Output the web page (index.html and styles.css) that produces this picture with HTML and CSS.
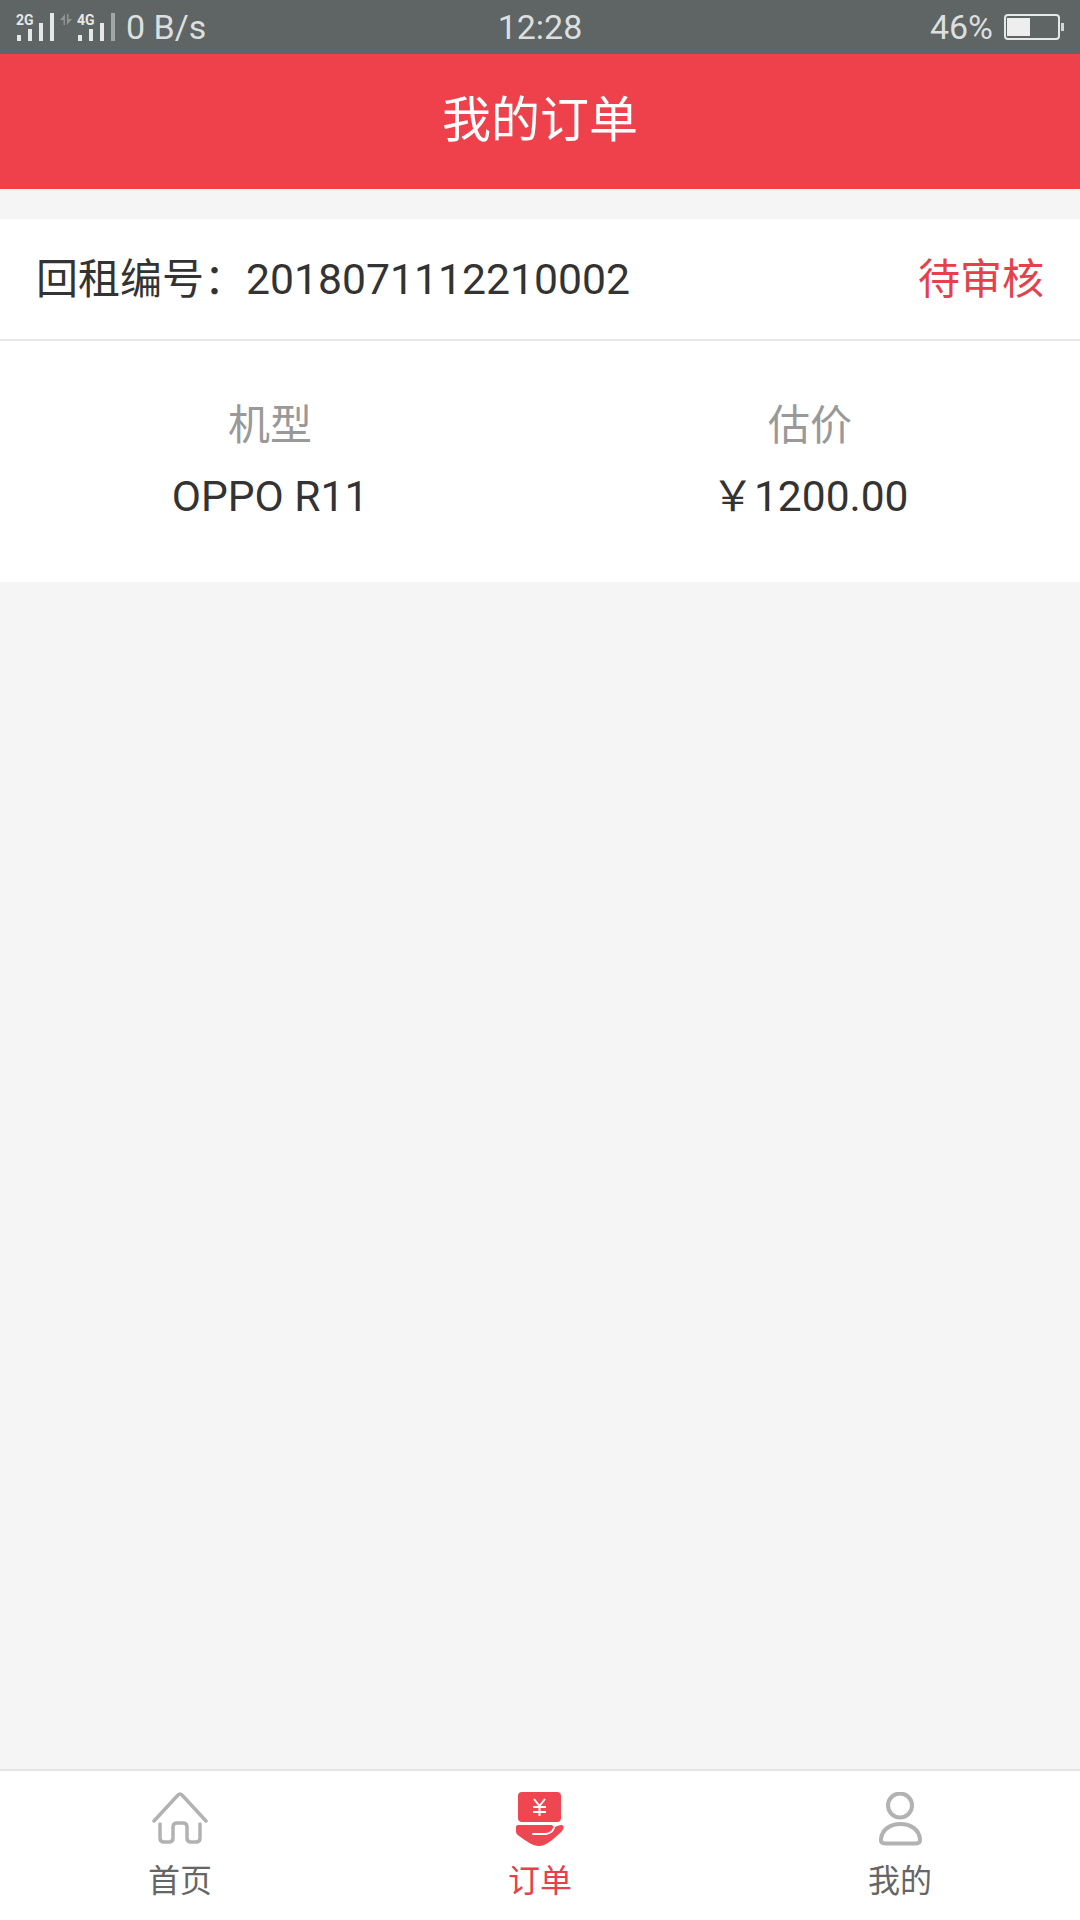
FILE: index.html
```html
<!DOCTYPE html>
<html lang="zh-CN">
<head>
  <meta charset="UTF-8">
  <title>我的订单</title>
  <link rel="stylesheet" href="styles.css">
</head>
<body>

  <div class="status-bar">
    <div class="status-left">
      <div class="signal">
        <span class="signal-label">2G</span>
        <svg class="signal-bars" width="37" height="28" viewBox="0 0 37 28">
          <rect x="0" y="22" width="4" height="6" fill="#e6e8e8"/>
          <rect x="11" y="16" width="4" height="12" fill="#e6e8e8"/>
          <rect x="22" y="10" width="4" height="18" fill="#e6e8e8"/>
          <rect x="33" y="0" width="4" height="28" fill="#e6e8e8"/>
        </svg>
      </div>
      <svg class="data-arrows" width="12" height="11" viewBox="0 0 12 11">
        <path d="M0 6 L5 0 V11 H3.5 V6 Z" fill="#8f9393"/>
        <path d="M12 5 L7 11 V0 H8.5 V5 Z" fill="#8f9393"/>
      </svg>
      <div class="signal">
        <span class="signal-label">4G</span>
        <svg class="signal-bars" width="37" height="28" viewBox="0 0 37 28">
          <rect x="0" y="22" width="4" height="6" fill="#e6e8e8"/>
          <rect x="11" y="16" width="4" height="12" fill="#e6e8e8"/>
          <rect x="22" y="10" width="4" height="18" fill="#e6e8e8"/>
          <rect x="33" y="0" width="4" height="28" fill="#a3a6a6"/>
        </svg>
      </div>
      <span class="net-speed">0 B/s</span>
    </div>
    <div class="status-time">12:28</div>
    <div class="status-right">
      <span class="battery-text">46%</span>
      <div class="battery">
        <div class="battery-level"></div>
      </div>
      <div class="battery-tip"></div>
    </div>
  </div>

  <div class="header">我的订单</div>

  <div class="content">
    <div class="order-card">
      <div class="order-top">
        <span class="order-no">回租编号：<span class="order-digits">2018071112210002</span></span>
        <span class="order-status">待审核</span>
      </div>
      <div class="order-info">
        <div class="info-col">
          <div class="info-label">机型</div>
          <div class="info-value">OPPO R11</div>
        </div>
        <div class="info-col">
          <div class="info-label">估价</div>
          <div class="info-value">￥1200.00</div>
        </div>
      </div>
    </div>
  </div>

  <div class="tabbar">
    <div class="tab">
      <svg class="tab-icon" width="56" height="56" viewBox="0 0 56 56" fill="none" stroke="#b2b2b2" stroke-width="3.5" stroke-linecap="round" stroke-linejoin="round">
        <path d="M2 29 L26 3 Q28 1 30 3 L54 29"/>
        <path d="M8 32 V46 Q8 50 12 50 H17 Q21 50 21 46 V35 Q21 31 25 31 H31 Q35 31 35 35 V46 Q35 50 39 50 H44 Q48 50 48 46 V32"/>
      </svg>
      <span class="tab-label">首页</span>
    </div>
    <div class="tab tab-active">
      <svg class="tab-icon" width="56" height="56" viewBox="0 0 56 56">
        <rect x="6" y="0" width="43" height="30" rx="4" fill="#ee4752"/>
        <path d="M22 7 L27.5 14 L33 7 M27.5 14 V24 M21 15 H34 M21 20 H34" fill="none" stroke="#fff" stroke-width="2"/>
        <path d="M4 35 Q4 33 6 33 H40 Q42 36 44 34.5 Q47 33 49 33 Q52 33 51.5 36 Q51 39 47 42 C40 48 34 54 27 54 C21 54 14 49 7 44 Q4 42 4 40 Z" fill="#ee4752"/>
        <path d="M21 42 H34 Q40 41 42 36" fill="none" stroke="#fff" stroke-width="2" stroke-linecap="round"/>
      </svg>
      <span class="tab-label">订单</span>
    </div>
    <div class="tab">
      <svg class="tab-icon" width="56" height="56" viewBox="0 0 56 56" fill="none" stroke="#b2b2b2" stroke-width="4">
        <circle cx="28" cy="13.5" r="12"/>
        <path d="M13 51.5 Q8.5 51.5 9 47 C10 37 19 32 28.5 32 C38 32 47 37 48 47 Q48.5 51.5 44 51.5 Z" stroke-linejoin="round"/>
      </svg>
      <span class="tab-label">我的</span>
    </div>
  </div>

</body>
</html>
```

FILE: styles.css
```css
* {
  box-sizing: border-box;
}

body {
  margin: 0;
  width: 1080px;
  height: 1920px;
  display: flex;
  flex-direction: column;
  background: #f5f5f5;
  font-family: Roboto, "Noto Sans CJK SC", sans-serif;
  overflow: hidden;
}

.status-bar {
  height: 54px;
  background: #5f6464;
  color: #dcdfdf;
  display: flex;
  align-items: center;
  justify-content: space-between;
  padding: 0 16px 0 17px;
  position: relative;
  font-size: 34px;
}

.status-left {
  display: flex;
  align-items: center;
}

.signal {
  position: relative;
  width: 37px;
  height: 28px;
}

.signal-bars {
  display: block;
}

.signal-label {
  position: absolute;
  left: -1px;
  top: 0;
  font-size: 14px;
  font-weight: 700;
  line-height: 14px;
  color: #e6e8e8;
}

.data-arrows {
  margin: 0 6px 16px 6px;
}

.net-speed {
  margin-left: 11px;
}

.status-time {
  position: absolute;
  left: 0;
  right: 0;
  text-align: center;
}

.status-right {
  display: flex;
  align-items: center;
}

.battery-text {
  margin-right: 11px;
}

.battery {
  width: 56px;
  height: 26px;
  border: 2px solid #e6e8e8;
  border-radius: 4px;
  padding: 2px 1px;
}

.battery-level {
  width: 23px;
  height: 100%;
  background: #eeeeee;
}

.battery-tip {
  width: 3px;
  height: 8px;
  margin-left: 1px;
  background: #d5d7d7;
}

.header {
  height: 135px;
  padding-bottom: 12px;
  background: #ef414c;
  color: #ffffff;
  font-size: 49px;
  display: flex;
  align-items: center;
  justify-content: center;
}

.content {
  flex: 1;
  padding-top: 30px;
}

.order-card {
  background: #ffffff;
}

.order-top {
  height: 122px;
  padding: 0 36px 8px;
  display: flex;
  align-items: center;
  justify-content: space-between;
  border-bottom: 2px solid #e6e6e6;
  font-size: 42px;
  color: #333333;
}

.order-digits {
  font-size: 42.7px;
}

.order-status {
  color: #e5404b;
}

.order-info {
  height: 241px;
  display: flex;
  padding-top: 55px;
}

.info-col {
  flex: 1;
  text-align: center;
}

.info-label {
  font-size: 42px;
  line-height: 60px;
  color: #999999;
}

.info-value {
  font-size: 42.5px;
  line-height: 60px;
  margin-top: 11px;
  color: #333333;
}

.tabbar {
  height: 151px;
  background: #ffffff;
  border-top: 2px solid #e6e6e6;
  display: flex;
}

.tab {
  flex: 1;
  display: flex;
  flex-direction: column;
  align-items: center;
  padding-top: 21px;
}

.tab-icon {
  display: block;
}

.tab-label {
  font-size: 32px;
  line-height: 44px;
  margin-top: 11px;
  color: #666666;
}

.tab-active .tab-label {
  color: #e5404b;
}
```
